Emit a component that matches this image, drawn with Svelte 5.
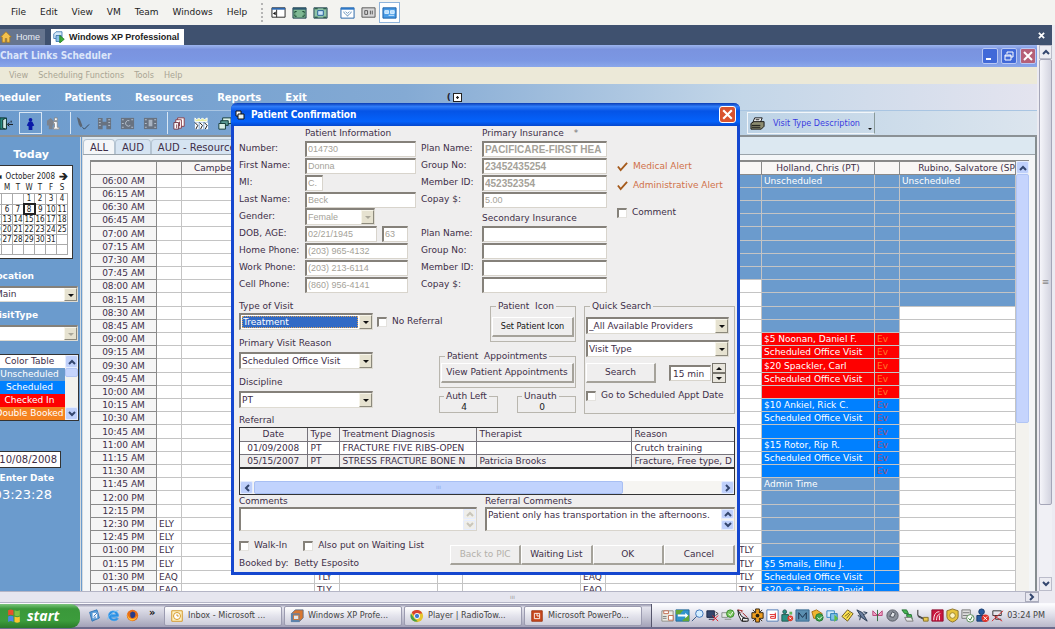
<script lang="ts">
  type Shape = [d: string, fill: string, stroke?: string];

  const vmMenu = ['File', 'Edit', 'View', 'VM', 'Team', 'Windows', 'Help'];
  const appMenu = ['View', 'Scheduling Functions', 'Tools', 'Help'];
  const nav = ['Scheduler', 'Patients', 'Resources', 'Reports', 'Exit'];
  const weekdays = ['S', 'M', 'T', 'W', 'T', 'F', 'S'];

  const weeks = Array.from({ length: 6 }, (_, w) =>
    Array.from({ length: 7 }, (_, d) => {
      const day = w * 7 + d - 2;
      return day > 0 && day < 32 ? day : '';
    })
  );

  const colors = [
    { label: 'Color Table', kind: 'plain' },
    { label: 'Unscheduled', kind: 'open' },
    { label: 'Scheduled', kind: 'booked' },
    { label: 'Checked In', kind: 'arrived' },
    { label: 'Double Booked', kind: 'double' }
  ];

  // quarter hours from 06:00 AM to 01:45 PM
  const times = Array.from({ length: 32 }, (_, i) => {
    const hour = 6 + Math.floor(i / 4);
    const shown = hour > 12 ? hour - 12 : hour;
    const minutes = String((i % 4) * 15).padStart(2, '0');
    return `${String(shown).padStart(2, '0')}:${minutes} ${hour < 12 ? 'AM' : 'PM'}`;
  });

  const holland: Record<number, string> = {
    0: 'Unscheduled',
    12: '$5 Noonan, Daniel F.',
    13: 'Scheduled Office Visit',
    14: '$20 Spackler, Carl',
    15: 'Scheduled Office Visit',
    17: '$10 Ankiel, Rick C.',
    18: 'Scheduled Office Visit',
    20: '$15 Rotor, Rip R.',
    21: 'Scheduled Office Visit',
    23: 'Admin Time',
    29: '$5 Smails, Elihu J.',
    30: 'Scheduled Office Visit',
    31: '$20 @ * Briggs, David'
  };

  function hollandKind(i: number) {
    if (i < 12) return 'open';
    if (i < 17) return 'arrived';
    if (i < 23) return 'booked';
    return i < 29 ? 'open' : 'booked';
  }

  const patient = [
    { id: 'number', label: 'Number:', value: '014730' },
    { id: 'first', label: 'First Name:', value: 'Donna' },
    { id: 'mi', label: 'MI:', value: 'C.', size: 'tiny' },
    { id: 'last', label: 'Last Name:', value: 'Beck' },
    { id: 'gender', label: 'Gender:', value: 'Female' },
    { id: 'dob', label: 'DOB, AGE:', value: '02/21/1945' },
    { id: 'home', label: 'Home Phone:', value: '(203) 965-4132', size: 'phone' },
    { id: 'work', label: 'Work Phone:', value: '(203) 213-6114', size: 'phone' },
    { id: 'cell', label: 'Cell Phone:', value: '(860) 956-4141', size: 'phone' }
  ];

  const insurance = [
    { title: 'Primary Insurance', values: ['PACIFICARE-FIRST HEA', '23452435254', '452352354', '5.00'] },
    { title: 'Secondary Insurance', values: ['', '', '', ''] }
  ];
  const planLabels = ['Plan Name:', 'Group No:', 'Member ID:', 'Copay $:'];

  const referrals = [
    ['01/09/2008', 'PT', 'FRACTURE FIVE RIBS-OPEN', '', 'Crutch training'],
    ['05/15/2007', 'PT', 'STRESS FRACTURE BONE N', 'Patricia Brooks', 'Fracture, Free type, D']
  ];

  let minutes = $state('15 min');
  let comments = $state('');
  let referralComments = $state('Patient only has transportation in the afternoons.');

  const vmIcons: Shape[][] = [
    [['M1 3h14v10H1z', '#fff', '#222'], ['M1 3h14v2H1z', '#2d68b0'], ['M6 5v8', 'none', '#222'], ['M5 7v4l-3-2z', '#111']],
    [['M1 3h14v11H1z', '#7fb893', '#1d3d4c'], ['M1 3h14v2H1z', '#2d5870'], ['M3 9V7h2M11 7h2v2M13 10v2h-2M5 12H3v-2', 'none', '#164430']],
    [['M1 3h14v11H1z', '#8fc4a8', '#1d3d4c'], ['M5 6h6v5H5z', '#cde5fb', '#225d96'], ['M2 4h3M11 4h3M2 13h3M11 13h3', 'none', '#164430']],
    [['M1 3h14v11H1z', '#fff', '#2262a8'], ['M1 3h14v2H1z', '#2d78c8'], ['M4 7c0 3 3 2 4 5M12 7c0 3-3 2-4 5M6 7l2 2 2-2', 'none', '#6792bc']],
    [['M1 3h14v10H1z', '#d7d7d7', '#555'], ['M4 6h3v4H4zM10 6v4M12 6v4', 'none', '#555']],
    [['M1 3h14v11H1z', '#4a9be5', '#185ea8'], ['M3 6h4v3H3zM9 6h4v3H9zM7 11h6', '#b6dcff', '#d9efff']]
  ];

  const toolIcons: Shape[][] = [
    [['M2 2h6v12H2z', '#2b8a80', '#08302d'], ['M5 4l4-2v12l-4-1z', '#d0e8e4', '#08302d'], ['M11 9h5M12 7l-2 2 2 2M14 5v2', 'none', '#111']],
    [['M8 2a2 2 0 1 1 0 4 2 2 0 0 1 0-4zM6 6h4l2 4-2 1v4H6v-4L4 10z', '#0a1aa8']],
    [['M1 5l4-3 3 3v5H1zM3 9h4v5H3z', '#7d838d'], ['M9 2h3v3H9zM8 6h4v6h2v2H8v-2h1V8H8z', '#fff', '#8d8d8d']],
    [['M2 1l3 2 2 5-3 1zM4 9l3-1 1 3-2 1z', '#5c6673'], ['M8 12l2 2 5-5', 'none', '#35424f']],
    [['M1 2h5v12H1zM10 2h5v12h-5zM6 6h4v4H6z', '#687280'], ['M2 4h2M2 7h2M2 10h2M12 4h2M12 7h2M12 10h2', 'none', '#b7c2cf']],
    [['M1 2h14v12H1z', '#687280'], ['M2 4h2M2 8h2M2 12h2M12 4h2M12 12h2M10 5a3 3 0 1 0 1 5', 'none', '#b7c2cf']],
    [['M1 2h14v12H1z', '#687280'], ['M2 4h2M2 8h2M2 12h2M12 4h2M12 8h2M12 12h2', 'none', '#b7c2cf'], ['M6 4h4v7H6z', '#a8b3c1']],
    [['M6 2h7v9H6z', '#fff', '#893c48'], ['M4 4h6v9H4z', '#fff', '#893c48'], ['M2 7h5v7H2z', '#fff', '#703848'], ['M8 6v5M5 9v4', 'none', '#893c48']],
    [['M1 2l2 2 2-2 2 2 2-2 2 2 3-2v4H1z', '#e8ef9e', '#fff'], ['M1 7h4v7H1zM6 7h4v7H6zM11 7h4v7h-4z', '#fff'], ['M1 7l3 3-2 4M6 7l3 3-2 4M11 7l3 3-2 4', 'none', '#111']],
    [['M6 2h9v6H6z', '#d8efe6', '#123b38'], ['M4 5h8v5H4z', '#5a9a94', '#123b38'], ['M2 8h7v6H2z', '#d8efe6', '#123b38']]
  ];

  const launchIcons: Shape[][] = [
    [['M2 4l9-3 3 10-9 4z', '#5aa3e0', '#2a6dac'], ['M5 4h7v8H5z', '#f3f9ff', '#3c83c5'], ['M7 9l4-4M7 10h3', 'none', '#1b62b5']],
    [['M13 10H5c1 3 5 3 7 1l2 1c-3 4-12 3-12-4 0-8 13-7 12 1H5V7h6C10 3 5 4 5 8', '#2a8be0', '#3aa0ee'], ['M1 13C0 9 9 2 14 2', 'none', '#72c3f6']],
    [['M8 1a7 7 0 1 1 0 14A7 7 0 0 1 8 1z', '#e66d18'], ['M8 3a4 4 0 1 1-1 8C4 9 6 7 5 5z', '#263c8a'], ['M2 5c0 8 8 10 12 3-1 5-5 7-8 6-3-1-5-5-4-9z', '#ffc33b']]
  ];

  const tasks: { label: string; icon: Shape[] }[] = [
    { label: 'Inbox - Microsoft ...', icon: [['M2 2h12v12H2z', '#fff2c2', '#d18e14'], ['M8 4a4 4 0 1 1 0 8 4 4 0 0 1 0-8zM8 6v2h2', '#fff', '#d18e14']] },
    { label: 'Windows XP Profe...', icon: [['M2 5l4-4h9v9l-4 4H2z', '#d97730', '#5d6a80'], ['M1 5h10v10H1z', '#5d83ab'], ['M4 7h6v5H4z', '#e2e7ed', '#cf702b']] },
    { label: 'Player | RadioTow...', icon: [['M8 1a7 7 0 1 1 0 14A7 7 0 0 1 8 1z', '#e5c52f'], ['M2 4a7 7 0 0 1 12 1H8L6 9z', '#d84232'], ['M1 5l4 6 4 3c-6 2-10-4-8-9z', '#45a048'], ['M8 5a3 3 0 1 1 0 6 3 3 0 0 1 0-6z', '#3c7bd1', '#fff']] },
    { label: 'Microsoft PowerPo...', icon: [['M2 2h12v12H2z', '#c9481d', '#9b3310'], ['M5 5h6v6H5zM8 5v3h3', '#c9481d', '#fff']] }
  ];

  const trayIcons: Shape[][] = [
    [['M2 3h12v11H2z', '#ecece4', '#8d8d86'], ['M4 3h5v3H4zM9 8h5v5H9z', '#fff', '#c06a4e'], ['M3 9h4M3 11h4', 'none', '#777']],
    [['M1 2h14v12H1z', '#3194cc', '#246895'], ['M1 2h8l-4 5H1zM8 13l7-6v7H8z', '#60a639'], ['M3 7h8V5l3 3-3 3V9H3z', '#fff']],
    [['M10 2a4 4 0 1 1 0 8 4 4 0 0 1 0-8z', '#d3edff', '#3b72b9'], ['M7 9l-5 5', 'none', '#34547e']],
    [['M2 3h8v7H2zM4 12h6', '#35476c', '#1d2744'], ['M11 4l3 2-3 2', 'none', '#444'], ['M8 8l6 6M14 8l-6 6', 'none', '#e31b23']],
    [['M2 5h6v5H2zM5 12h7', '#e5e8e5', '#858d88'], ['M11 2a4 4 0 1 1 0 8 4 4 0 0 1 0-8z', '#77c45d', '#388629'], ['M9 6l2 2 3-4', 'none', '#fff']],
    [['M3 2l4 7 6 3-1 2H7L4 8z', '#fff', '#111'], ['M3 2l5 1-2 2M8 5l5 5', 'none', '#a01818'], ['M8 11h6v3H8z', '#eee', '#111']],
    [['M6 1h4v4h4v6h-4v4H6v-4H2V5h4zM3 2l3 3M13 2l-3 3M3 14l3-3M13 14l-3-3', '#f0a020', '#30210d'], ['M8 6a2 2 0 1 1 0 4 2 2 0 0 1 0-4z', '#29200e']],
    [['M2 2h12v12H2z', '#fff', '#507bb5'], ['M5 7h6v4H6V9h4M11 5v6', 'none', '#df2424']],
    [['M5 2a2 2 0 1 1 0 4 2 2 0 0 1 0-4zM2 7h7v7H2z', '#2a9285', '#225950'], ['M10 4h3v3h-3z', '#62b65b'], ['M11 8a3 3 0 1 1 0 6 3 3 0 0 1 0-6z', '#dc3c2b'], ['M10 10l2 2M12 10l-2 2', 'none', '#fff']],
    [['M1 2h14v12H1z', '#5b8fb1', '#376b91'], ['M4 12V5l4 5 4-5v7', 'none', '#152c48']],
    [['M2 4l5-2 6 4-3 5H4z', '#efb530', '#a86d10'], ['M10 6a4 4 0 1 1 0 8 4 4 0 0 1 0-8z', '#3ca34d', '#247532'], ['M8 10l2 2 3-3', 'none', '#fff']],
    [['M2 3h8v7H2z', '#d4ecfa', '#3586c1'], ['M6 6h7v7H6z', '#7dc0ea', '#257aaf'], ['M10 7l4 4-4 4z', '#61bd42']],
    [['M8 2l6 4-6 8-6-5z', '#ffe552', '#69551b'], ['M5 9l5-4M7 11l4-5', 'none', '#69551b']],
    [['M2 2l6 3 5 9-6-4z', '#697d9d', '#26374f'], ['M3 8l3 1-1 4M9 4l4 1-3 2', '#acb9cb', '#26374f']],
    [['M8 8L3 3v5zM8 8l5-5v5z', '#f1a3c5', '#b84577'], ['M8 2v12', 'none', '#326c3e']],
    [['M8 2a6 6 0 1 1 0 12A6 6 0 0 1 8 2z', '#8b909a', '#555a64'], ['M8 4l3 2-2 4-4-1z', '#e1e4e9', '#454a54']],
    [['M2 2h5l2 4H5zM7 7h5l1 5H8z', '#46b550', '#247333'], ['M5 10h7l2 4H7z', '#e8e8e8', '#777']],
    [['M3 2v6l6 3', 'none', '#222'], ['M3 9l8 4 3-2', 'none', '#333'], ['M9 10h5v4H9z', '#e9c851', '#857025']],
    [['M2 2h12v12H2z', '#c9153e', '#8f1030'], ['M4 13c0-7 3-9 6-9M7 13c0-5 2-6 4-7M10 13V8', 'none', '#fff']],
    [['M8 1l6 2v6c0 3-3 5-6 6-3-1-6-3-6-6V3z', '#e6c33b', '#87702c'], ['M8 5a3 3 0 1 1 0 6 3 3 0 0 1 0-6z', '#fff5c2', '#9a812c']],
    [['M2 2h9v9H2z', '#ddd', '#777'], ['M3 5h7M3 8h7', 'none', '#777'], ['M11 7a4 4 0 1 1 0 8 4 4 0 0 1 0-8z', '#fff', '#5a8c56'], ['M9 11l2 2 2-4', 'none', '#297a27']],
    [['M7 1a3 3 0 1 1 0 6 3 3 0 0 1 0-6zM2 8h9v6H2z', '#285ba0', '#14396c'], ['M11 7a4 4 0 1 1 0 8 4 4 0 0 1 0-8z', '#de3329'], ['M9 9l4 4M13 9l-4 4', 'none', '#fff']],
    [['M3 3h9v5H3z', '#e6e6ec', '#333'], ['M6 8v4h6', 'none', '#333'], ['M2 14L14 3M4 8l9 6', 'none', '#d12b2b']]
  ];
</script>

{#snippet icon(shapes: Shape[])}
  <svg class="icon" viewBox="0 0 16 16" aria-hidden="true">
    {#each shapes as [d, fill, stroke]}
      <path {d} {fill} stroke={stroke ?? 'none'} />
    {/each}
  </svg>
{/snippet}

{#snippet chevron(dir: string)}
  <svg class="chevron {dir}" viewBox="0 0 8 8" aria-hidden="true"><path d="M1 6l3-3 3 3" /></svg>
{/snippet}

{#snippet drop(id: string, value: string, label: string, kind = '')}
  <span class="drop {kind}">
    <select {id} aria-label={label} disabled={kind.includes('off')}><option>{value}</option></select>
    <span class="arrow"></span>
  </span>
{/snippet}

{#snippet tick(label: string)}
  <label class="tick"><input type="checkbox" />{label}</label>
{/snippet}

<div class="desktop">
  <header class="vm-menu">
    <nav>
      {#each vmMenu as item}<button>{item}</button>{/each}
    </nav>
    <div class="vm-tools">
      {#each vmIcons as shapes, i}
        <button class:split={i === 3} class:pressed={i === 5} aria-label="View mode {i + 1}">{@render icon(shapes)}</button>
      {/each}
    </div>
  </header>

  <div class="vm-tabs">
    <button class="vm-tab">
      <svg class="icon" viewBox="0 0 16 16" aria-hidden="true"><path d="M1 8l7-7 7 7h-2v7H9v-5H7v5H3V8z" fill="#f2c14e" stroke="#b07c16" /></svg>
      Home
    </button>
    <button class="vm-tab current">
      <svg class="icon" viewBox="0 0 16 16" aria-hidden="true"><path d="M1 4l3-3h8v9H1z" fill="#d4e8f9" stroke="#2b69a6" /><path d="M4 6h7v8H4z" fill="#8bc0ea" stroke="#2b69a6" /><path d="M9 6l6 5-6 5z" fill="#41ad3b" stroke="#1e7a1c" /></svg>
      Windows XP Professional
    </button>
    <button class="vm-close" aria-label="Close tab">
      <svg viewBox="0 0 8 8" aria-hidden="true"><path d="M1 1l6 6M7 1L1 7" /></svg>
    </button>
  </div>

  <div class="guest">
    <div class="app">
      <div class="app-title">
        <h1>Chart Links Scheduler</h1>
        <button aria-label="Minimize"><svg viewBox="0 0 14 14"><path d="M3 10h5" stroke-width="2" /></svg></button>
        <button aria-label="Restore"><svg viewBox="0 0 14 14"><path d="M5 5V3h6v5H9M3 6h6v5H3zM3 7h6" /></svg></button>
        <button class="close" aria-label="Close"><svg viewBox="0 0 14 14"><path d="M3 3l8 8M11 3l-8 8" stroke-width="2" /></svg></button>
      </div>
      <nav class="app-menu">
        {#each appMenu as item}<button>{item}</button>{/each}
      </nav>
      <nav class="app-nav">
        {#each nav as item}<a href="#{item.toLowerCase()}">{item}</a>{/each}
        <span class="dock">(<i></i></span>
      </nav>
      <div class="toolbar">
        {#each toolIcons as shapes, i}
          <button class:pressed={i === 1} class:split={i === 3 || i === 7} aria-label="Tool {i + 1}">{@render icon(shapes)}</button>
        {/each}
        <button class="visit-desc">
          <svg class="icon" viewBox="0 0 16 16" aria-hidden="true"><path d="M5 2h8l-2 5H3z" fill="#fff" stroke="#111" /><path d="M1 8l3-2h11v5l-3 3H1z" fill="#8c8c70" stroke="#111" /><path d="M2 10h9M2 12h9M6 4h4" fill="none" stroke="#111" /></svg>
          <span>Visit Type Description</span>
          <span class="caret"></span>
        </button>
      </div>

      <div class="workspace">
        <aside>
          <h2>Today</h2>
          <div class="calendar">
            <div class="month"><span>◄</span> October 2008 <b>🡲</b></div>
            <table>
              <thead>
                <tr>{#each weekdays as day}<th>{day}</th>{/each}</tr>
              </thead>
              <tbody>
                {#each weeks as week}
                  <tr>{#each week as day}<td class:today={day === 8}>{day}</td>{/each}</tr>
                {/each}
              </tbody>
            </table>
          </div>
          <h3><label for="location">Location</label></h3>
          {@render drop('location', 'Main', 'Location')}
          <h3><label for="visittype">VisitType</label></h3>
          {@render drop('visittype', '', 'VisitType', 'off')}
          <div class="color-table">
            <ul>
              {#each colors as { label, kind }}<li class={kind}>{label}</li>{/each}
            </ul>
            <div class="xp-scroll">
              <button aria-label="Scroll up">{@render chevron('up')}</button>
              <i class="short"></i>
              <button aria-label="Scroll down">{@render chevron('down')}</button>
            </div>
          </div>
          <input class="date" id="date" value="10/08/2008" />
          <h4><label for="date">Enter Date</label></h4>
          <time>03:23:28</time>
        </aside>

        <main>
          <div class="resource-tabs">
            <button class="current">ALL</button>
            <button>AUD</button>
            <button>AUD - Resource</button>
          </div>
          <div class="schedule">
            <table>
              <colgroup>
                <col class="time" /><col class="code" /><col class="campbell" /><col class="code" /><col class="mid" />
                <col class="code" /><col class="wide" /><col class="code" /><col class="open-col" /><col class="code" />
                <col class="holland" /><col class="code" /><col />
              </colgroup>
              <thead>
                <tr>
                  <th></th><th></th><th class="first">Campbell</th><th></th><th></th><th></th><th></th><th></th><th></th><th></th>
                  <th>Holland, Chris (PT)</th><th></th><th class="last">Rubino, Salvatore (SP</th>
                </tr>
              </thead>
              <tbody>
                {#each times as time, i}
                  <tr>
                    <th>{time}</th>
                    <td>{i >= 30 ? 'EAQ' : i >= 26 ? 'ELY' : ''}</td>
                    <td></td>
                    <td>{i >= 30 ? 'TLY' : ''}</td>
                    <td></td>
                    <td></td>
                    <td></td>
                    <td>{i >= 30 ? 'EAQ' : ''}</td>
                    <td></td>
                    <td class:open={i < 8}>{i >= 28 ? 'TLY' : ''}</td>
                    <td class={hollandKind(i)}>{holland[i] ?? ''}</td>
                    <td class="ev {hollandKind(i)}">{i >= 12 && i < 23 ? 'Ev' : ''}</td>
                    <td class:open={i < 10}>{i === 0 ? 'Unscheduled' : ''}</td>
                  </tr>
                {/each}
              </tbody>
            </table>
            <div class="xp-scroll">
              <button aria-label="Scroll up">{@render chevron('up')}</button>
              <i class="long"></i>
            </div>
          </div>
        </main>
      </div>
    </div>
    <div class="vm-scroll">
      <button aria-label="Scroll up">{@render chevron('up')}</button>
      <i>≡</i>
      <button aria-label="Scroll down">{@render chevron('down')}</button>
    </div>
  </div>

  <div class="vm-hscroll">
    <i>ııı</i>
    <button aria-label="Scroll right">{@render chevron('right')}</button>
  </div>

  <footer>
    <button class="start">
      <svg viewBox="0 0 16 16" aria-hidden="true"><path d="M2 3c2-1 3-1 5 0v5c-2-1-3-1-5 0z" fill="#e8502c" /><path d="M8 3c2 1 3 1 5 0v5c-2 1-3 1-5 0z" fill="#7fc242" /><path d="M2 9c2-1 3-1 5 0v5c-2-1-3-1-5 0z" fill="#4a86e8" /><path d="M8 9c2 1 3 1 5 0v5c-2 1-3 1-5 0z" fill="#fbc52d" /></svg>
      start
    </button>
    <div class="launch">
      {#each launchIcons as shapes, i}<button aria-label="Launch {i + 1}">{@render icon(shapes)}</button>{/each}
      <b>»</b>
    </div>
    {#each tasks as task}
      <button class="task">{@render icon(task.icon)}<span>{task.label}</span></button>
    {/each}
    <div class="tray">
      {#each trayIcons as shapes}{@render icon(shapes)}{/each}
      <time>03:24 PM</time>
    </div>
  </footer>

  <section class="dialog" role="dialog" aria-labelledby="dialog-title">
    <div class="dialog-title">
      <svg viewBox="0 0 10 10" aria-hidden="true"><path d="M1 1h5v5H1z" fill="#fff" stroke="#111" /><path d="M3 4h6v5H3z" fill="#e9f4f4" stroke="#111" /></svg>
      <h2 id="dialog-title">Patient Confirmation</h2>
      <button aria-label="Close"><svg viewBox="0 0 14 14"><path d="M3 3l8 8M11 3l-8 8" /></svg></button>
    </div>

    <form onsubmit={(e) => e.preventDefault()}>
      <div class="facts">
        <div class="fields">
          <h3 class="inset">Patient Information</h3>
          {#each patient as { id, label, value, size }}
            <label for={id}>{label}</label>
            {#if id === 'gender'}
              {@render drop(id, value, label, 'off gender')}
            {:else if id === 'dob'}
              <span class="pair">
                <input {id} {value} disabled />
                <input class="age" value="63" aria-label="Age" disabled />
              </span>
            {:else}
              <input class={size} {id} {value} disabled />
            {/if}
          {/each}
        </div>

        <div class="fields plans">
          {#each insurance as { title, values }, p}
            <h3 class="inset">{title}{#if p === 0}<span class="star">*</span>{/if}</h3>
            {#each planLabels as label, i}
              <label for="plan{p}{i}">{label}</label>
              <input id="plan{p}{i}" class:strong={i < 3} value={values[i]} disabled />
            {/each}
          {/each}
        </div>

        <div class="alerts">
          {#each ['Medical Alert', 'Administrative Alert'] as alert}
            <p>
              <svg viewBox="0 0 12 12" aria-hidden="true"><path d="M1 6l3 4 7-8" /></svg>
              {alert}
            </p>
          {/each}
          {@render tick('Comment')}
        </div>
      </div>

      <div class="visit">
        <div class="choices">
          <label for="type">Type of Visit</label>
          <div class="line">
            {@render drop('type', 'Treatment', 'Type of Visit', 'picked')}
            {@render tick('No Referral')}
          </div>
          <label for="reason">Primary Visit Reason</label>
          {@render drop('reason', 'Scheduled Office Visit', 'Primary Visit Reason')}
          <label for="discipline">Discipline</label>
          {@render drop('discipline', 'PT', 'Discipline')}
        </div>

        <div class="appointments">
          <fieldset class="patient-icon">
            <legend>Patient&nbsp; Icon</legend>
            <button class="raised">Set Patient Icon</button>
          </fieldset>
          <fieldset>
            <legend>Patient&nbsp; Appointments</legend>
            <button class="raised">View Patient Appointments</button>
          </fieldset>
          <div class="auth">
            <fieldset><legend>Auth Left</legend><output>4</output></fieldset>
            <fieldset><legend>Unauth</legend><output>0</output></fieldset>
          </div>
        </div>

        <fieldset class="quick">
          <legend>Quick Search</legend>
          {@render drop('providers', '_All Available Providers', 'Providers')}
          {@render drop('quicktype', 'Visit Type', 'Visit Type')}
          <div class="search">
            <button class="raised">Search</button>
            <span class="spinner">
              <input bind:value={minutes} aria-label="Length" />
              <span class="steps">
                <button class="more" aria-label="More"></button>
                <button class="less" aria-label="Less"></button>
              </span>
            </span>
          </div>
          {@render tick('Go to Scheduled Appt Date')}
        </fieldset>
      </div>

      <h3 class="referral-title">Referral</h3>
      <div class="referrals">
        <table>
          <colgroup><col class="date-col" /><col class="type-col" /><col class="diag-col" /><col class="who-col" /><col /></colgroup>
          <thead>
            <tr><th>Date</th><th>Type</th><th>Treatment Diagnosis</th><th>Therapist</th><th>Reason</th></tr>
          </thead>
          <tbody>
            {#each referrals as row}
              <tr>{#each row as cell}<td>{cell}</td>{/each}</tr>
            {/each}
          </tbody>
        </table>
        <div class="xp-hscroll">
          <button aria-label="Scroll left">{@render chevron('left')}</button>
          <i>ııı</i>
          <button aria-label="Scroll right">{@render chevron('right')}</button>
        </div>
      </div>

      <div class="notes">
        <div class="note own">
          <label for="comments">Comments</label>
          <div class="box">
            <textarea id="comments" bind:value={comments}></textarea>
            <div class="xp-scroll idle">
              <button aria-label="Scroll up">{@render chevron('up')}</button>
              <button aria-label="Scroll down">{@render chevron('down')}</button>
            </div>
          </div>
        </div>
        <div class="note">
          <label for="refcomments">Referral Comments</label>
          <div class="box">
            <textarea id="refcomments" bind:value={referralComments}></textarea>
            <div class="xp-scroll">
              <button aria-label="Scroll up">{@render chevron('up')}</button>
              <button aria-label="Scroll down">{@render chevron('down')}</button>
            </div>
          </div>
        </div>
      </div>

      <div class="actions">
        <div class="flags">
          <div class="line">
            {@render tick('Walk-In')}
            {@render tick('Also put on Waiting List')}
          </div>
          <p>Booked by:&nbsp; <span>Betty Esposito</span></p>
        </div>
        <div class="buttons">
          <button class="raised" disabled>Back to PIC</button>
          <button class="raised">Waiting List</button>
          <button class="raised">OK</button>
          <button class="raised">Cancel</button>
        </div>
      </div>
    </form>
  </section>
</div>

<style>
  :global(body) {
    margin: 0;
    overflow: hidden;
  }

  .desktop {
    --blue: #6b9bcd;
    --ink: #3e2e48;
    position: relative;
    display: flex;
    flex-direction: column;
    height: 100vh;
    overflow: hidden;
    background: #ecebf2;
    color: var(--ink);
    font: 9px/13px "DejaVu Sans", Verdana, sans-serif;
  }

  .desktop *,
  .desktop *::before {
    box-sizing: border-box;
  }

  button,
  input,
  select,
  textarea {
    margin: 0;
    padding: 0;
    border: 0;
    border-radius: 0;
    background: none;
    color: inherit;
    font: inherit;
  }

  h1,
  h2,
  h3,
  h4,
  p,
  ul {
    margin: 0;
    padding: 0;
    font-size: inherit;
    font-weight: normal;
    list-style: none;
  }

  a {
    color: inherit;
    text-decoration: none;
  }

  table {
    border-collapse: collapse;
    table-layout: fixed;
  }

  th,
  td {
    padding: 0;
    overflow: hidden;
    font-weight: normal;
    white-space: nowrap;
  }

  .icon {
    flex: none;
    width: 15px;
    height: 15px;
  }

  .chevron {
    display: block;
    width: 8px;
    height: 8px;
    fill: none;
    stroke: #33466e;
    stroke-width: 2;
  }

  .down {
    transform: rotate(180deg);
  }

  .left {
    transform: rotate(-90deg);
  }

  .right {
    transform: rotate(90deg);
  }

  /* host window */
  .vm-menu {
    display: flex;
    flex: none;
    align-items: center;
    height: 25px;
    background: #f3f3f0;
    color: #222;
  }

  .vm-menu nav {
    display: flex;
    gap: 14px;
    padding-left: 11px;
  }

  .vm-tools {
    display: flex;
    align-items: center;
    gap: 2px;
    margin-left: 22px;
    padding-left: 6px;
    border-left: 2px dotted #b5b5b5;
  }

  .vm-menu .vm-tools {
    margin-left: 14px;
  }

  .vm-tools button {
    display: flex;
    padding: 2px;
  }

  .vm-tools .split {
    margin-left: 6px;
  }

  .vm-tools .pressed {
    outline: 1px solid #8fb4dc;
    background: #fff;
  }

  .vm-tabs {
    display: flex;
    flex: none;
    align-items: flex-end;
    height: 20px;
    margin-right: 3px;
    background: #3f516f;
    color: #e8edf5;
    font: 9px/14px "Liberation Sans", Arial, sans-serif;
  }

  .vm-tab {
    display: flex;
    align-items: center;
    gap: 4px;
    height: 16px;
    margin-right: 6px;
    padding: 0 5px 0 0;
    background: #66758f;
  }

  .vm-tab .icon {
    width: 12px;
    height: 12px;
  }

  .vm-tab.current {
    padding: 0 5px 0 2px;
    background: #fff;
    color: #222;
    font-weight: bold;
  }

  .vm-close {
    margin: 0 7px 6px auto;
  }

  .vm-close svg {
    display: block;
    width: 7px;
    height: 7px;
    stroke: #fff;
    stroke-width: 2;
  }

  .guest {
    display: flex;
    flex: 1;
    min-height: 0;
    padding-right: 3px;
  }

  .app {
    display: flex;
    flex: 1;
    flex-direction: column;
    min-width: 0;
    overflow: hidden;
  }

  .app-title {
    display: flex;
    flex: none;
    align-items: center;
    gap: 3px;
    height: 22px;
    padding-right: 1px;
    background: linear-gradient(#9db5ee, #7a93df 20%, #7b97e3 70%, #8aa7ea);
  }

  .app-title h1 {
    flex: 1;
    color: #dce6fa;
    font: bold 10px/18px "DejaVu Sans Condensed", "DejaVu Sans", sans-serif;
  }

  .app-title button {
    width: 16px;
    height: 16px;
    border: 1px solid #b9c8f3;
    border-radius: 2px;
    background: #4169d8;
  }

  .app-title .close {
    background: #b56078;
  }

  .app-title svg {
    display: block;
    width: 14px;
    height: 14px;
    fill: none;
    stroke: #fff;
  }

  .app-menu {
    display: flex;
    flex: none;
    gap: 10px;
    height: 17px;
    padding-left: 9px;
    background: #ece9d8;
    color: #a9a594;
    font-family: "DejaVu Sans Condensed", "DejaVu Sans", sans-serif;
  }

  .app-nav {
    display: flex;
    flex: none;
    align-items: center;
    gap: 24px;
    height: 26px;
    margin-left: -16px;
    background: linear-gradient(90deg, #6c9bcd, #84aad4 40%, #c3d6e8 72%, #e4e4ef);
    color: #fff;
    font-size: 10px;
    font-weight: bold;
  }

  .dock {
    display: flex;
    align-items: center;
    margin-left: 116px;
    color: #223;
    font-size: 9px;
  }

  .dock i {
    width: 9px;
    height: 9px;
    margin-left: 2px;
    border: 1px solid #222;
    background: radial-gradient(#222 20%, #fff 30%);
  }

  .toolbar {
    display: flex;
    flex: none;
    align-items: center;
    height: 27px;
    border-top: 1px solid #a9c5e2;
    border-bottom: 2px solid #8b9195;
    background: linear-gradient(90deg, #6c9bcd, #84aad4 40%, #bdd3e6 72%, #dce5ee);
  }

  .toolbar button {
    display: flex;
    flex: none;
    align-items: center;
    justify-content: center;
    width: 23px;
    height: 22px;
  }

  .toolbar button:first-child {
    margin: 0 2px 0 -6px;
  }

  .toolbar .pressed {
    border: 1px solid #d8e6f4;
  }

  .toolbar .split {
    margin-left: 5px;
    border-left: 1px solid #d8e6f4;
  }

  .toolbar .visit-desc {
    gap: 8px;
    width: 128px;
    margin-left: auto;
    margin-right: 162px;
    border: 1px solid #f2f6fa;
    border-right-color: #899;
    color: #3a3ae0;
    font-family: "DejaVu Sans Condensed", "DejaVu Sans", sans-serif;
  }

  .visit-desc .caret {
    align-self: flex-end;
    margin-bottom: 1px;
    border: 2px solid transparent;
    border-top-color: #111;
  }

  .workspace {
    display: flex;
    flex: 1;
    min-height: 0;
  }

  /* left panel, its first letters run off the window edge */
  aside {
    display: flex;
    flex: none;
    flex-direction: column;
    align-items: flex-end;
    width: 83px;
    padding-right: 5px;
    overflow: hidden;
    border-right: 3px double #d5dade;
    background: var(--blue);
    white-space: nowrap;
  }

  aside h2 {
    margin: 10px 26px 3px 0;
    color: #fff;
    font-size: 11px;
    font-weight: bold;
    line-height: 15px;
  }

  .calendar {
    width: 86px;
    height: 94px;
    margin-right: 2px;
    padding: 3px 4px 0 2px;
    border: 1px solid #333;
    background: #fff;
    color: #222;
    font: 8px/10px "DejaVu Sans Condensed", "DejaVu Sans", sans-serif;
  }

  .month {
    display: flex;
    justify-content: flex-end;
    gap: 4px;
    height: 14px;
    line-height: 16px;
  }

  .month b {
    font-size: 11px;
  }

  .calendar table {
    width: 78px;
  }

  .calendar th,
  .calendar td {
    height: 10px;
    text-align: center;
  }

  .calendar td {
    border: 1px solid #aaa;
    line-height: 9px;
  }

  .calendar .today {
    border: 2px solid #222;
    line-height: 7px;
  }

  aside h3 {
    margin-top: 11px;
    margin-bottom: 3px;
    color: #fff;
    font-weight: bold;
  }

  aside h3:nth-of-type(1) {
    margin-right: 41px;
  }

  aside h3:nth-of-type(2) {
    margin-top: 7px;
    margin-right: 37px;
  }

  aside > :global(.drop) {
    width: 86px;
    height: 16px;
    margin-right: -3px;
  }

  .color-table {
    display: flex;
    width: 86px;
    height: 67px;
    margin: 13px -4px 0 0;
    border: 1px solid #333;
    background: #fff;
    text-align: center;
  }

  .color-table ul {
    flex: 1;
    overflow: hidden;
  }

  .color-table li {
    height: 13px;
  }

  .open {
    background: var(--blue);
    color: #fff;
  }

  .booked {
    background: #0080ff;
    color: #fff;
  }

  .arrived {
    background: #fe0000;
    color: #fff;
  }

  .double {
    background: #f58220;
    color: #fff;
  }

  .xp-scroll {
    display: flex;
    flex: none;
    flex-direction: column;
    width: 13px;
    background: #f3f2ee;
  }

  .xp-scroll button,
  .xp-hscroll button {
    display: flex;
    flex: none;
    align-items: center;
    justify-content: center;
    width: 13px;
    height: 13px;
    border: 1px solid #e5edff;
    border-radius: 2px;
    background: #bfd0fb;
  }

  .xp-scroll button:last-child {
    margin-top: auto;
  }

  .xp-scroll button:first-child {
    margin-top: 0;
  }

  .xp-scroll i {
    border: 1px solid #b1c5f5;
    border-radius: 2px;
    background: #c5d4fd;
  }

  .short {
    height: 9px;
  }

  .long {
    height: 249px;
  }

  .date {
    width: 76px;
    height: 17px;
    margin: 30px 14px 3px 0;
    padding: 0 3px;
    border: 1px solid #333;
    background: #fff;
    font-size: 10px;
    text-align: right;
  }

  aside h4 {
    margin: 1px 21px 2px 0;
    color: #fff;
    font-weight: bold;
  }

  aside time {
    margin-right: 23px;
    color: #fff;
    font-size: 13px;
    line-height: 15px;
  }

  /* appointment grid */
  main {
    display: flex;
    flex: 1;
    flex-direction: column;
    min-width: 0;
    border-right: 2px solid #858d90;
    background: #f4f6f8;
  }

  .resource-tabs {
    display: flex;
    flex: none;
    align-items: flex-end;
    height: 18px;
    border-bottom: 1px solid #9aa3aa;
    background: #dce8f1;
    font-size: 10px;
  }

  .resource-tabs button {
    height: 15px;
    padding: 0 6px;
    border: 1px solid #b5c4d2;
    border-bottom: 0;
    border-radius: 4px 4px 0 0;
    background: #d6e4f2;
  }

  .resource-tabs .current {
    background: #f4f6f8;
  }

  .schedule {
    display: flex;
    flex: 1;
    min-height: 0;
    margin: 5px 6px 0 7px;
    overflow: hidden;
    border-top: 1px solid #888;
  }

  .schedule table {
    flex: 1;
    width: 100px;
    align-self: flex-start;
    background: #fff;
  }

  .schedule tr {
    height: 13px;
  }

  .schedule tbody tr:nth-child(5n) {
    height: 14px;
  }

  .schedule td,
  .schedule th {
    border: 1px solid #c4c4c4;
    line-height: 12px;
  }

  .schedule td {
    padding-left: 2px;
  }

  .schedule th {
    border-color: #8a8a8a;
    background: #f5f5f5;
    text-align: center;
  }

  .schedule thead th {
    background: #f8f6f5;
  }

  .schedule .first {
    padding-left: 12px;
    text-align: left;
  }

  .schedule .last {
    text-align: right;
  }

  .ev {
    color: #a8506e;
  }

  .ev.arrived {
    color: #ff7a2a;
  }

  .time {
    width: 66px;
  }

  .code {
    width: 25px;
  }

  .campbell {
    width: 133px;
  }

  .mid {
    width: 98px;
  }

  .wide {
    width: 118px;
  }

  .open-col {
    width: 131px;
  }

  .holland {
    width: 113px;
  }

  .vm-scroll {
    display: flex;
    flex: none;
    flex-direction: column;
    width: 13px;
    margin-left: 2px;
    background: #f0f0f5;
  }

  .vm-scroll button {
    display: flex;
    align-items: center;
    justify-content: center;
    height: 14px;
    border: 1px solid #bbbcca;
    background: #ececf2;
  }

  .vm-scroll i {
    display: flex;
    flex: 1;
    align-items: center;
    justify-content: center;
    margin-bottom: 72px;
    border: 1px solid #a5a6b8;
    border-radius: 2px;
    background: linear-gradient(90deg, #f5f5fa, #d2d3df);
    color: #888;
    font-style: normal;
  }

  .vm-hscroll {
    display: flex;
    flex: none;
    height: 12px;
    margin-right: 16px;
    border-top: 1px solid #b4b5c6;
    border-bottom: 1px solid #b4b5c6;
    background: #e6e6ef;
  }

  .vm-hscroll i {
    flex: 1;
    color: #999;
    font-size: 6px;
    font-style: normal;
    line-height: 9px;
    text-align: center;
  }

  .vm-hscroll button {
    padding: 0 2px;
    border: 1px solid #aaabbb;
  }

  /* taskbar */
  footer {
    display: flex;
    flex: none;
    align-items: center;
    height: 26px;
    border-top: 1px solid #fafafe;
    border-bottom: 2px solid #6d6b8c;
    background: linear-gradient(#8c8ca4, #e2e2ec 15%, #c3c3d2 60%, #a3a2b8);
    color: #444;
    font-family: "DejaVu Sans Condensed", "DejaVu Sans", sans-serif;
  }

  .start {
    display: flex;
    align-items: center;
    gap: 4px;
    width: 80px;
    height: 24px;
    padding-left: 6px;
    border-radius: 0 9px 9px 0;
    background: linear-gradient(#7cc57c, #3a983a 20%, #3c9c3c 70%, #2a7a2a);
    color: #fff;
    font: italic bold 14px/20px "Open Sans", sans-serif;
  }

  .start svg {
    width: 17px;
    height: 17px;
  }

  .launch {
    display: flex;
    align-items: center;
    gap: 6px;
    width: 84px;
    padding-left: 8px;
  }

  .launch button {
    display: flex;
  }

  .launch .icon {
    width: 13px;
    height: 13px;
  }

  .launch b {
    align-self: flex-start;
    margin-left: 4px;
    color: #111;
    font-size: 11px;
    line-height: 8px;
  }

  .task {
    display: flex;
    flex: 0 1 118px;
    align-items: center;
    gap: 4px;
    height: 20px;
    margin-right: 2px;
    padding-left: 5px;
    border: 1px solid #9b9bb0;
    border-radius: 2px;
    background: linear-gradient(#fff, #e3e3ec 50%, #cdcdda);
    white-space: nowrap;
  }

  .task .icon {
    width: 14px;
    height: 14px;
  }

  .tray {
    display: flex;
    align-items: center;
    height: 23px;
    margin-left: auto;
    padding: 0 10px 0 8px;
    border-left: 1px solid #55556c;
    background: linear-gradient(#fdfdff, #dddde8 50%, #b9b9ca);
  }

  .tray time {
    margin-left: 2px;
    white-space: nowrap;
  }

  /* dialog */
  .dialog {
    position: absolute;
    top: 103px;
    left: 231px;
    width: 509px;
    border: 3px solid #1547cf;
    border-top: 0;
    border-radius: 6px 6px 0 0;
    background: #efeeee;
  }

  .dialog-title {
    display: flex;
    align-items: center;
    gap: 6px;
    height: 23px;
    margin: 0 -3px;
    padding: 0 4px;
    border-radius: 6px 6px 0 0;
    background: linear-gradient(#0a3cb4, #2f7cf8 15%, #0554e6 35%, #0462fb 80%, #0547cd);
    color: #fff;
  }

  .dialog-title > svg {
    width: 10px;
    height: 10px;
  }

  .dialog-title h2 {
    flex: 1;
    font: bold 10px/18px "DejaVu Sans Condensed", "DejaVu Sans", sans-serif;
  }

  .dialog-title button {
    width: 17px;
    height: 17px;
    border: 1px solid #fff;
    border-radius: 3px;
    background: #d9532f;
  }

  .dialog-title button svg {
    display: block;
    width: 15px;
    height: 15px;
    stroke: #fff;
    stroke-width: 2;
  }

  form {
    padding: 0 2px 2px 5px;
  }

  .facts {
    display: flex;
    gap: 5px;
  }

  .fields {
    display: grid;
    flex: none;
    grid-template-columns: 66px 111px;
    grid-template-rows: 14px;
    grid-auto-rows: 17px;
    align-items: center;
    white-space: nowrap;
  }

  .plans {
    grid-template-columns: 61px 125px;
  }

  .inset {
    grid-column: 2;
  }

  .plans .inset:nth-of-type(2) {
    padding-top: 3px;
  }

  .star {
    margin-left: 10px;
    color: #777;
  }

  .fields input,
  .spinner input,
  .box {
    height: 16px;
    border: 1px solid #d8d4cc;
    border-top: 2px solid #85817a;
    border-left: 2px solid #85817a;
    background: #fff;
  }

  .fields input {
    width: 100%;
    padding-left: 1px;
    color: #a5a299;
    font: 9px/12px "Liberation Sans", Arial, sans-serif;
  }

  .fields input.strong {
    font-weight: bold;
    font-size: 10px;
  }

  .fields input.tiny {
    width: 18px;
  }

  .fields input.phone {
    width: 103px;
  }

  .pair {
    display: flex;
    gap: 5px;
  }

  .pair input {
    width: 72px;
  }

  .pair .age {
    width: 26px;
  }

  .alerts {
    display: flex;
    flex-direction: column;
    gap: 6px;
    padding: 34px 0 0 5px;
    color: #d0714a;
    white-space: nowrap;
  }

  .alerts p {
    display: flex;
    align-items: center;
    gap: 5px;
  }

  .alerts svg {
    width: 11px;
    height: 11px;
    fill: none;
    stroke: #a55a1c;
    stroke-width: 2;
  }

  .alerts .tick {
    margin-top: 8px;
    color: var(--ink);
  }

  .tick {
    display: flex;
    align-items: center;
    gap: 5px;
    white-space: nowrap;
  }

  .tick input {
    flex: none;
    width: 10px;
    height: 10px;
    appearance: none;
    border: 1px solid #e4e2de;
    border-top: 2px solid #85817a;
    border-left: 2px solid #85817a;
    background: #fff;
  }

  .drop {
    display: flex;
    flex: none;
    height: 17px;
    border: 1px solid #dedbd2;
    border-top: 2px solid #85817a;
    border-left: 2px solid #85817a;
    background: #fff;
  }

  .drop select {
    flex: 1;
    min-width: 0;
    padding-left: 1px;
    appearance: none;
    opacity: 1;
  }

  .picked select {
    outline: 1px dotted #d9a35b;
    outline-offset: -2px;
    border: 1px solid #fff;
    background: #316ac5;
    color: #fff;
  }

  .drop .arrow {
    flex: none;
    width: 13px;
    border: 1px solid #f7f5ea;
    border-right-color: #8c897c;
    border-bottom-color: #8c897c;
    background: #e6e2d0;
  }

  .arrow::before {
    display: block;
    width: 0;
    margin: 5px auto 0;
    border: 3px solid transparent;
    border-top-color: #111;
    border-bottom: 0;
    content: '';
  }

  .off .arrow::before {
    border-top-color: #aaa799;
  }

  .gender {
    width: 70px;
    color: #a5a299;
    font: 9px/12px "Liberation Sans", Arial, sans-serif;
  }

  .visit {
    display: flex;
    height: 121px;
    padding-top: 7px;
  }

  .choices {
    display: flex;
    flex: 1;
    flex-direction: column;
    align-items: flex-start;
    min-width: 0;
  }

  .choices > label:not(:first-child) {
    margin: 7px 0 2px;
  }

  .choices :global(.drop) {
    width: 134px;
  }

  .line {
    display: flex;
    gap: 4px;
  }

  .appointments {
    display: flex;
    flex: none;
    flex-direction: column;
    width: 137px;
    margin-right: 8px;
  }

  fieldset {
    min-width: 0;
    margin: 0;
    padding: 0 1px 4px;
    border: 1px solid #b9b6ae;
  }

  legend {
    margin-left: 4px;
    padding: 0 2px;
    white-space: nowrap;
  }

  .patient-icon {
    align-self: flex-end;
    width: 86px;
    margin-bottom: 8px;
    padding-top: 4px;
  }

  .raised {
    width: 100%;
    height: 20px;
    border: 1px solid #fff;
    border-right: 2px solid #a5a29a;
    border-bottom: 2px solid #a5a29a;
    background: #efeeee;
    white-space: nowrap;
  }

  .patient-icon .raised {
    color: #111;
    font-family: "DejaVu Sans Condensed", "DejaVu Sans", sans-serif;
  }

  .raised:disabled {
    color: #b3b0aa;
  }

  .auth {
    display: flex;
    justify-content: space-between;
    margin-top: 2px;
  }

  .auth fieldset {
    width: 59px;
    padding: 0;
  }

  .auth output {
    display: block;
    padding-right: 9px;
    color: #222;
    line-height: 9px;
    text-align: center;
  }

  .quick {
    display: flex;
    flex: none;
    flex-direction: column;
    gap: 6px;
    width: 151px;
    padding-top: 4px;
  }

  .quick > :global(.drop) {
    width: 143px;
  }

  .search {
    display: flex;
    gap: 13px;
  }

  .search .raised {
    width: 70px;
  }

  .spinner {
    display: flex;
    align-items: center;
    gap: 1px;
  }

  .spinner input {
    width: 42px;
    padding-left: 2px;
  }

  .steps {
    display: flex;
    flex-direction: column;
  }

  .steps button {
    width: 14px;
    height: 10px;
    border: 1px solid #77746c;
    background: #e8e5dc;
  }

  .steps button::before {
    display: block;
    width: 0;
    margin: 0 auto;
    border: 3px solid transparent;
    content: '';
  }

  .steps .more::before {
    border-top: 0;
    border-bottom-color: #111;
  }

  .steps .less::before {
    border-bottom: 0;
    border-top-color: #111;
  }

  .referral-title {
    height: 13px;
    line-height: 12px;
  }

  .referrals {
    display: flex;
    flex-direction: column;
    justify-content: space-between;
    height: 68px;
    overflow: hidden;
    border: 1px solid #333;
    background: #fff;
  }

  .referrals table {
    width: 100%;
  }

  .referrals tr {
    height: 13px;
  }

  .referrals th,
  .referrals td {
    padding-left: 3px;
    border: 1px solid #77747c;
    border-top: 0;
    line-height: 12px;
    text-align: left;
  }

  .referrals th {
    background: #f1f0f0;
  }

  .referrals tr > :first-child {
    padding: 0;
    border-left: 0;
    text-align: center;
  }

  .referrals tr > :last-child {
    border-right: 0;
  }

  .referrals tbody tr:last-child {
    border-bottom: 2px solid #333;
    background: #efeeee;
  }

  .date-col {
    width: 67px;
  }

  .type-col {
    width: 32px;
  }

  .diag-col {
    width: 137px;
  }

  .who-col {
    width: 155px;
  }

  .xp-hscroll {
    display: flex;
    gap: 1px;
    background: #f6f5f2;
  }

  .xp-hscroll i {
    flex: 1;
    margin-right: 97px;
    border: 1px solid #a8bff3;
    border-radius: 2px;
    background: #c1d3fd;
    color: #8aa5e5;
    font-size: 6px;
    font-style: normal;
    line-height: 10px;
    text-align: center;
  }

  .notes {
    display: flex;
    gap: 8px;
  }

  .note {
    flex: 1;
  }

  .own {
    flex: 0 0 238px;
  }

  .note label {
    display: block;
    height: 12px;
    line-height: 12px;
  }

  .box {
    display: flex;
    height: 24px;
  }

  .box textarea {
    flex: 1;
    min-width: 0;
    padding: 0 1px;
    overflow: hidden;
    line-height: 13px;
    resize: none;
    white-space: nowrap;
  }

  .box .xp-scroll button {
    height: 10px;
  }

  .idle button {
    background: #efeeea;
  }

  .idle :global(.chevron) {
    stroke: #c9c6bb;
  }

  .actions {
    display: flex;
    justify-content: space-between;
    padding-top: 8px;
  }

  .flags .line {
    gap: 16px;
  }

  .flags p {
    margin-top: 5px;
  }

  .buttons {
    display: flex;
    flex: none;
    width: 285px;
    padding-top: 6px;
  }

  .buttons .raised {
    flex: 1;
  }
</style>
